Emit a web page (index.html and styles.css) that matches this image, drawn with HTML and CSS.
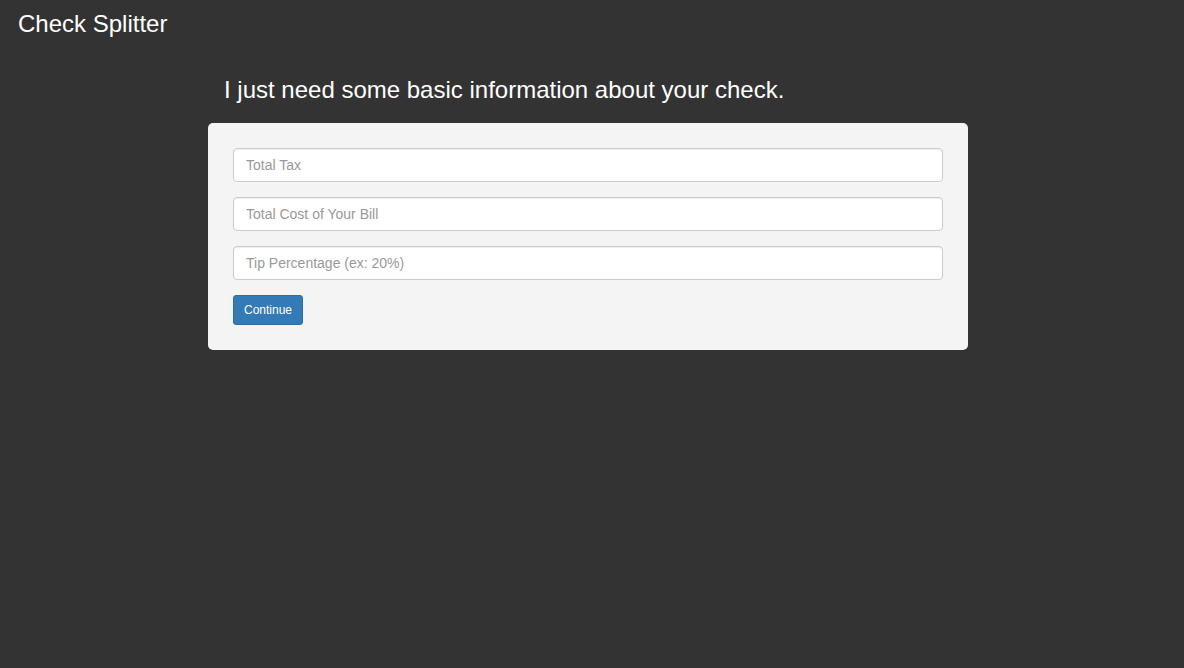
FILE: index.html
```html
<!DOCTYPE html>
<html lang="en">
<head>
<meta charset="utf-8">
<title>Check Splitter</title>
<link rel="stylesheet" href="styles.css">
</head>
<body>
<header class="topbar">
  <h1 class="brand">Check Splitter</h1>
</header>
<main class="main">
  <h2 class="intro">I just need some basic information about your check.</h2>
  <form class="card">
    <input class="field" type="text" placeholder="Total Tax">
    <input class="field" type="text" placeholder="Total Cost of Your Bill">
    <input class="field" type="text" placeholder="Tip Percentage (ex: 20%)">
    <button class="btn" type="button">Continue</button>
  </form>
</main>
</body>
</html>
```

FILE: styles.css
```css
html, body {
  margin: 0;
  padding: 0;
}
body {
  background: #333333;
  font-family: "Liberation Sans", Arial, Helvetica, sans-serif;
  color: #fff;
  min-height: 668px;
}
.topbar {
  padding: 11px 18px 9px;
}
.brand {
  margin: 0;
  font-size: 24px;
  line-height: 26px;
  font-weight: normal;
  color: #fff;
}
.main {
  width: 760px;
  margin: 31px 0 0 208px;
}
.intro {
  margin: 0 0 20px;
  padding-left: 16px;
  font-size: 24px;
  line-height: 26px;
  font-weight: normal;
  color: #fff;
}
.card {
  background: #f4f4f4;
  border-radius: 5px;
  padding: 25px;
  display: flex;
  flex-direction: column;
  align-items: flex-start;
  gap: 15px;
}
.field {
  box-sizing: border-box;
  width: 100%;
  height: 34px;
  margin: 0;
  padding: 6px 12px;
  font-family: "Liberation Sans", Arial, Helvetica, sans-serif;
  font-size: 14px;
  color: #555;
  background: #fff;
  border: 1px solid #ccc;
  border-radius: 4px;
  box-shadow: inset 0 1px 1px rgba(0,0,0,0.075);
  outline: none;
}
.field::placeholder {
  color: #999;
}
.btn {
  box-sizing: border-box;
  height: 30px;
  padding: 5px 10px;
  font-family: "Liberation Sans", Arial, Helvetica, sans-serif;
  font-size: 12px;
  line-height: 18px;
  color: #fff;
  background: #337ab7;
  border: 1px solid #2e6da4;
  border-radius: 3px;
  cursor: pointer;
}
```
